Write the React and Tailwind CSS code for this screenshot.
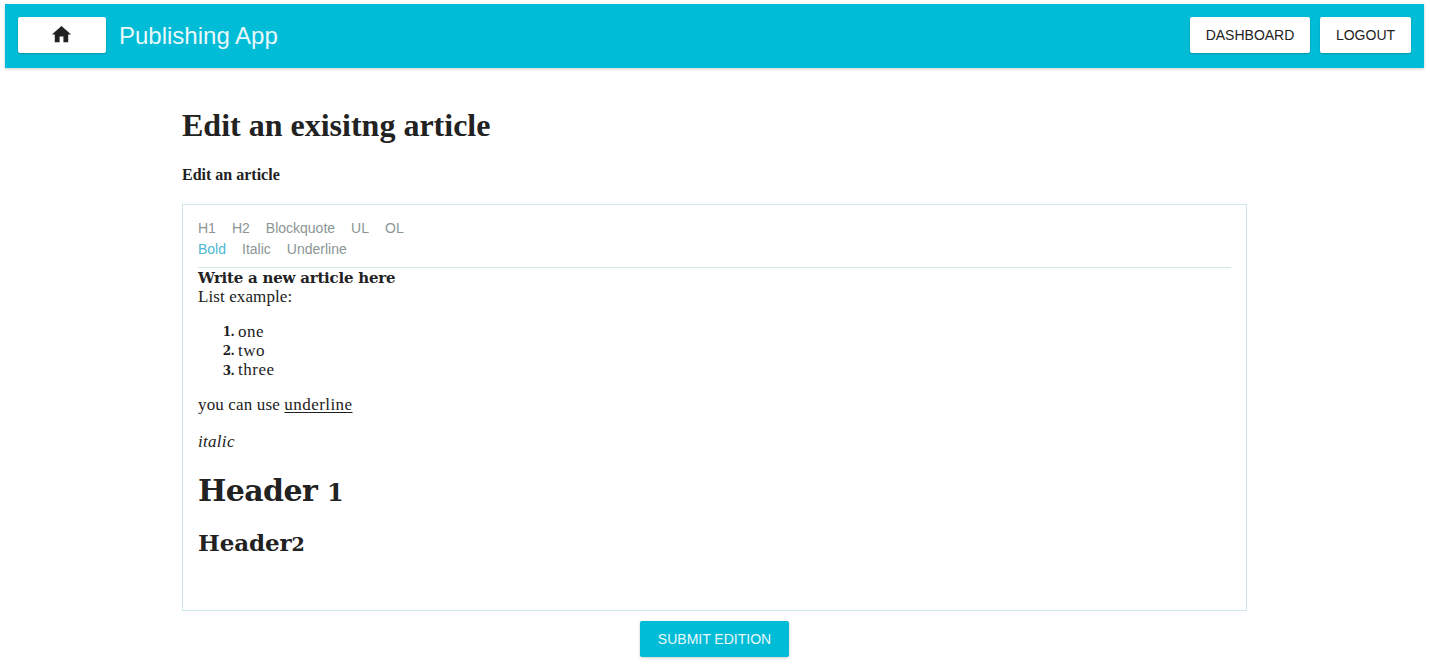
const blockControls = ['H1', 'H2', 'Blockquote', 'UL', 'OL'];
const inlineControls = ['Bold', 'Italic', 'Underline'];
const items = [
  { text: 'one', marker: 'pt-[1px] leading-[19px]' },
  { text: 'two', marker: 'pt-[1px] leading-[19px]' },
  { text: 'three', marker: 'pt-[2px] leading-[19px]' },
];

function AppBar() {
  return (
    <header className="ml-[5px] mr-[6px] flex h-16 items-start bg-[#00bcd7] px-[13px] pt-[13px] font-['Liberation_Sans',sans-serif] shadow-[0_1px_3px_rgba(0,0,0,0.2)]">
      <button className="flex h-9 w-[88px] items-center justify-center rounded-[2px] bg-white shadow-[0_1px_2px_rgba(0,0,0,0.2)]">
        <svg viewBox="0 0 24 24" className="-mt-[2px] mr-[1px] h-[23px] w-[23px] fill-[#222222]">
          <path d="M10 20v-6h4v6h5v-8h3L12 3 2 12h3v8z" />
        </svg>
      </button>
      <h1 className="ml-[13px] mt-[1px] flex-1 text-[24px] leading-9 text-[#e9f8fa]">Publishing App</h1>
      <nav className="flex gap-[10px] text-[14px] text-[#222222]">
        <button className="h-9 w-[120px] rounded-[2px] bg-white shadow-[0_1px_2px_rgba(0,0,0,0.2)]">DASHBOARD</button>
        <button className="h-9 w-[91px] rounded-[2px] bg-white shadow-[0_1px_2px_rgba(0,0,0,0.2)]">LOGOUT</button>
      </nav>
    </header>
  );
}

function Controls({ labels, active }) {
  return (
    <div className="flex h-[21px] items-center gap-4">
      {labels.map((label) => (
        <button key={label} className={label === active ? 'text-[#4bb8d0]' : 'text-[#8b9695]'}>
          {label}
        </button>
      ))}
    </div>
  );
}

function Editor() {
  return (
    <section className="h-[407px] border border-[#cfe6ea] px-[15px] pt-[13px]">
      <div className="h-[50px] border-b border-[#d5e4e6] font-['Liberation_Sans',sans-serif] text-[14px]">
        <Controls labels={blockControls} />
        <Controls labels={inlineControls} active="Bold" />
      </div>
      <div className="text-[17px] leading-[19px] tracking-[0.2px]">
        <p className="h-[19px] pt-[1px] font-['DejaVu_Serif',serif] text-[15px] font-bold leading-[19px] tracking-[-0.23px]">Write a new article here</p>
        <p className="tracking-[0.1px]">List example:</p>
        <ol className="mt-4">
          {items.map(({ text, marker }, i) => (
            <li key={text} className="flex h-[19px]">
              <span className={`w-[36px] text-right font-['DejaVu_Serif',serif] text-[12px] font-bold tracking-[-0.6px] ${marker}`}>{i + 1}.</span>
              <span className="ml-1 tracking-[0.5px]">{text}</span>
            </li>
          ))}
        </ol>
        <p className="mt-4 tracking-[0.15px]">you can use <u className="tracking-[0.45px] underline-offset-2">underline</u></p>
        <p className="mt-[18px] italic tracking-[0.3px]">italic</p>
      </div>
      <div className="font-['DejaVu_Serif',serif] font-bold">
        <h1 className="mt-[21px] text-[30px] leading-[38px] tracking-[-0.6px]">
          Header <span className="text-[24px]">1</span>
        </h1>
        <h2 className="mt-[17px] text-[23px] leading-[28px] tracking-[-0.1px]">
          Header<span className="text-[19px]">2</span>
        </h2>
      </div>
    </section>
  );
}

export default function App() {
  return (
    <div className="h-[666px] overflow-hidden bg-white pt-1 font-['Liberation_Serif',serif] text-[#222222]">
      <AppBar />
      <main className="ml-[182px] w-[1065px] pt-[39px]">
        <h1 className="text-[32px] font-bold leading-[37px]">Edit an exisitng article</h1>
        <p className="mb-[20px] mt-[22px] text-[16px] font-bold leading-[18px]">Edit an article</p>
        <Editor />
        <div className="mt-[10px] flex justify-center">
          <button className="h-9 w-[149px] rounded-[2px] bg-[#00bcd7] font-['Liberation_Sans',sans-serif] text-[14px] text-[#e9f8fa] shadow-[0_1px_3px_rgba(0,0,0,0.2)]">SUBMIT EDITION</button>
        </div>
      </main>
    </div>
  );
}
